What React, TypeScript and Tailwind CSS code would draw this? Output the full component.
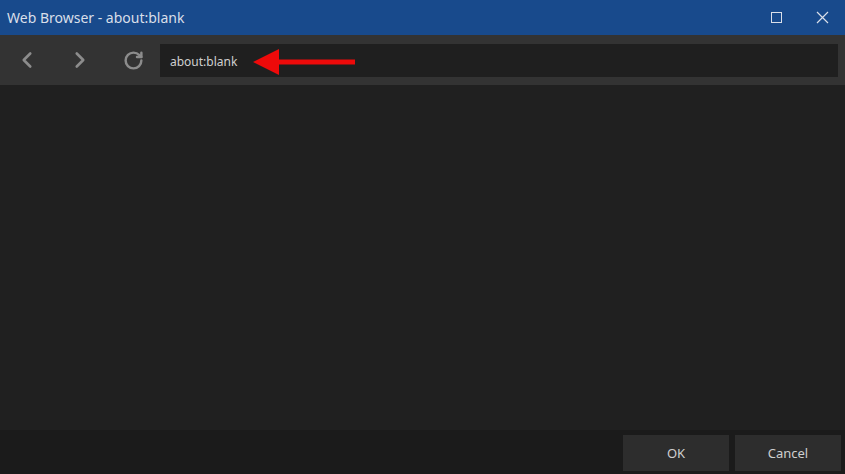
import { ChevronLeft, ChevronRight, RotateCw } from 'lucide-react'

function TitleBar() {
  return (
    <div className="flex h-[35px] items-center bg-[#184a8c] pl-[7px] text-[#d9dfe9]">
      <span className="flex-1 text-[14px]">Web Browser - about:blank</span>
      <button className="flex h-[35px] w-[46px] items-center justify-center" aria-label="Maximize">
        <span className="block h-[11px] w-[11px] border border-[#d9dfe9]" />
      </button>
      <button className="flex h-[35px] w-[46px] items-center justify-center" aria-label="Close">
        <svg width="13" height="13" viewBox="0 0 13 13" stroke="#d9dfe9" strokeWidth="1.2">
          <path d="M1 1 L12 12 M12 1 L1 12" />
        </svg>
      </button>
    </div>
  )
}

function Toolbar() {
  return (
    <div className="flex h-[50px] items-center bg-[#333333] pr-[7px]">
      <button className="flex h-[50px] w-[53px] items-center justify-center text-[#8c8c8c]">
        <ChevronLeft size={26} strokeWidth={2.4} />
      </button>
      <button className="flex h-[50px] w-[53px] items-center justify-center text-[#8c8c8c]">
        <ChevronRight size={26} strokeWidth={2.4} />
      </button>
      <button className="flex h-[50px] w-[54px] items-center justify-center text-[#8c8c8c]">
        <RotateCw size={21} strokeWidth={2.8} />
      </button>
      <div className="mt-[1px] flex h-[33px] flex-1 items-center gap-[16px] bg-[#1f1f1f] pl-[10px]">
        <span className="pt-[2px] text-[12px] text-[#d0d0d0]">about:blank</span>
        <svg width="103" height="26" viewBox="0 0 103 26" className="mt-[2px]">
          <polygon points="0,13 26,0 26,26" fill="#ee0a0a" />
          <rect x="24" y="10.5" width="78" height="5" fill="#ee0a0a" />
        </svg>
      </div>
    </div>
  )
}

export default function App() {
  return (
    <div className="flex h-[474px] w-[845px] flex-col bg-[#1f1f1f] font-['Noto_Sans',sans-serif]">
      <TitleBar />
      <Toolbar />
      <div className="flex-1 bg-[#202020]" />
      <div className="flex h-[44px] items-start justify-end gap-[6px] bg-[#1b1b1b] pr-[4px] pt-[5px]">
        <button className="h-[36px] w-[106px] bg-[#2d2d2d] pt-[2px] text-[13px] text-[#cfcfcf]">OK</button>
        <button className="h-[36px] w-[106px] bg-[#2d2d2d] pt-[2px] text-[13px] text-[#cfcfcf]">Cancel</button>
      </div>
    </div>
  )
}
